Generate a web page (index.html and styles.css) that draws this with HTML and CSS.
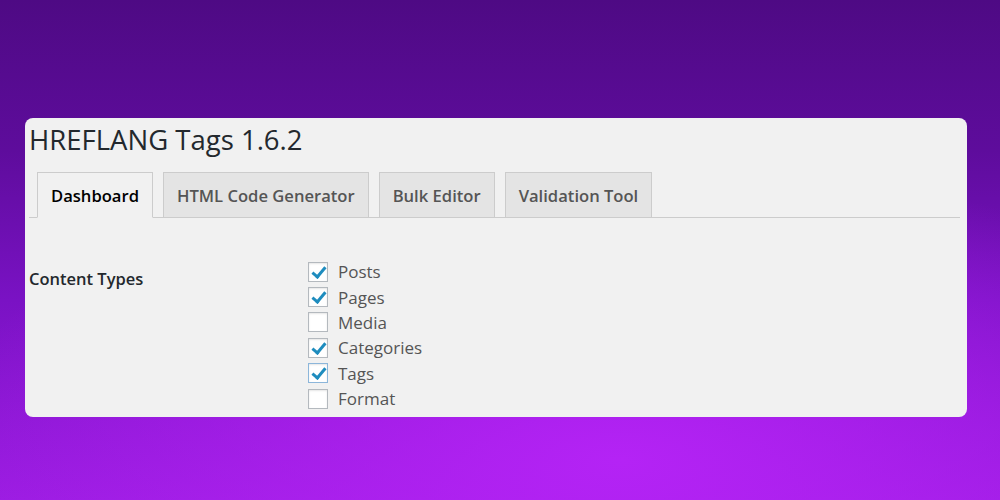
FILE: index.html
```html
<!DOCTYPE html>
<html lang="en">
<head>
  <meta charset="utf-8" />
  <title>HREFLANG Tags</title>
  <link rel="stylesheet" href="styles.css">
</head>
<body>
  <div class="page">
    <div class="card">
      <h1 class="title">HREFLANG Tags 1.6.2</h1>

      <nav class="tabs">
        <a class="tab active" href="#">Dashboard</a>
        <a class="tab" href="#">HTML Code Generator</a>
        <a class="tab" href="#">Bulk Editor</a>
        <a class="tab" href="#">Validation Tool</a>
      </nav>

      <div class="setting">
        <div class="setting-label">Content Types</div>
        <div class="setting-options">
          <label class="option"><span class="box checked"></span>Posts</label>
          <label class="option"><span class="box checked"></span>Pages</label>
          <label class="option"><span class="box"></span>Media</label>
          <label class="option"><span class="box checked"></span>Categories</label>
          <label class="option"><span class="box checked focus"></span>Tags</label>
          <label class="option"><span class="box"></span>Format</label>
        </div>
      </div>
    </div>
  </div>
</body>
</html>
```

FILE: styles.css
```css
/* page background */
body {
  margin: 0;
  padding: 0;
  font-family: "Open Sans", "Noto Sans", sans-serif;
}
.page {
  width: 1000px;
  height: 500px;
  box-sizing: border-box;
  padding: 118px 33px 0 25px;
  background:
    radial-gradient(ellipse 70% 60% at 62% 92%, rgba(184, 36, 248, 0.9) 0%, rgba(184, 36, 248, 0) 100%),
    linear-gradient(180deg, #4e0a84 0%, #5e0c9c 30%, #7a12c4 60%, #9a1ce0 100%);
}
/* white panel */
.card {
  height: 299px;
  box-sizing: border-box;
  background: #f1f1f1;
  border-radius: 8px;
  padding: 3px 7px 0 4px;
  overflow: hidden;
}
.title {
  margin: 0;
  font-size: 27.5px;
  font-weight: 400;
  line-height: 38px;
  color: #23282d;
}
/* tabs row */
.tabs {
  display: flex;
  gap: 10px;
  margin-top: 13px;
  padding-left: 8px;
  border-bottom: 1px solid #ccc;
}
.tab {
  display: block;
  padding: 0 13px;
  height: 44px;
  line-height: 46px;
  font-size: 16.6px;
  font-weight: 600;
  color: #555;
  text-decoration: none;
  background: #e4e4e4;
  border: 1px solid #ccc;
  border-bottom: none;
  margin-bottom: -1px;
}
.tab.active {
  background: #f1f1f1;
  color: #000;
  border-bottom: 1px solid #f1f1f1;
}
/* content types setting */
.setting {
  display: flex;
  padding-top: 41px;
}
.setting-label {
  width: 279px;
  font-size: 16.5px;
  font-weight: 600;
  color: #23282d;
  padding-top: 8px;
}
.setting-options {
  display: flex;
  flex-direction: column;
}
.option {
  display: flex;
  align-items: center;
  height: 25.4px;
  font-size: 17px;
  color: #555;
}
.box {
  width: 18px;
  height: 18px;
  border: 1px solid #b4b9be;
  background: #fff;
  margin-right: 10px;
  position: relative;
  box-shadow: inset 0 1px 2px rgba(0, 0, 0, 0.1);
}
.box.focus {
  border-color: #8cb6da;
}
/* check mark */
.box.checked::after {
  content: "";
  position: absolute;
  left: 6px;
  top: 1px;
  width: 5px;
  height: 11px;
  border: solid #1e8cbe;
  border-width: 0 3px 3px 0;
  transform: rotate(40deg);
}
```
